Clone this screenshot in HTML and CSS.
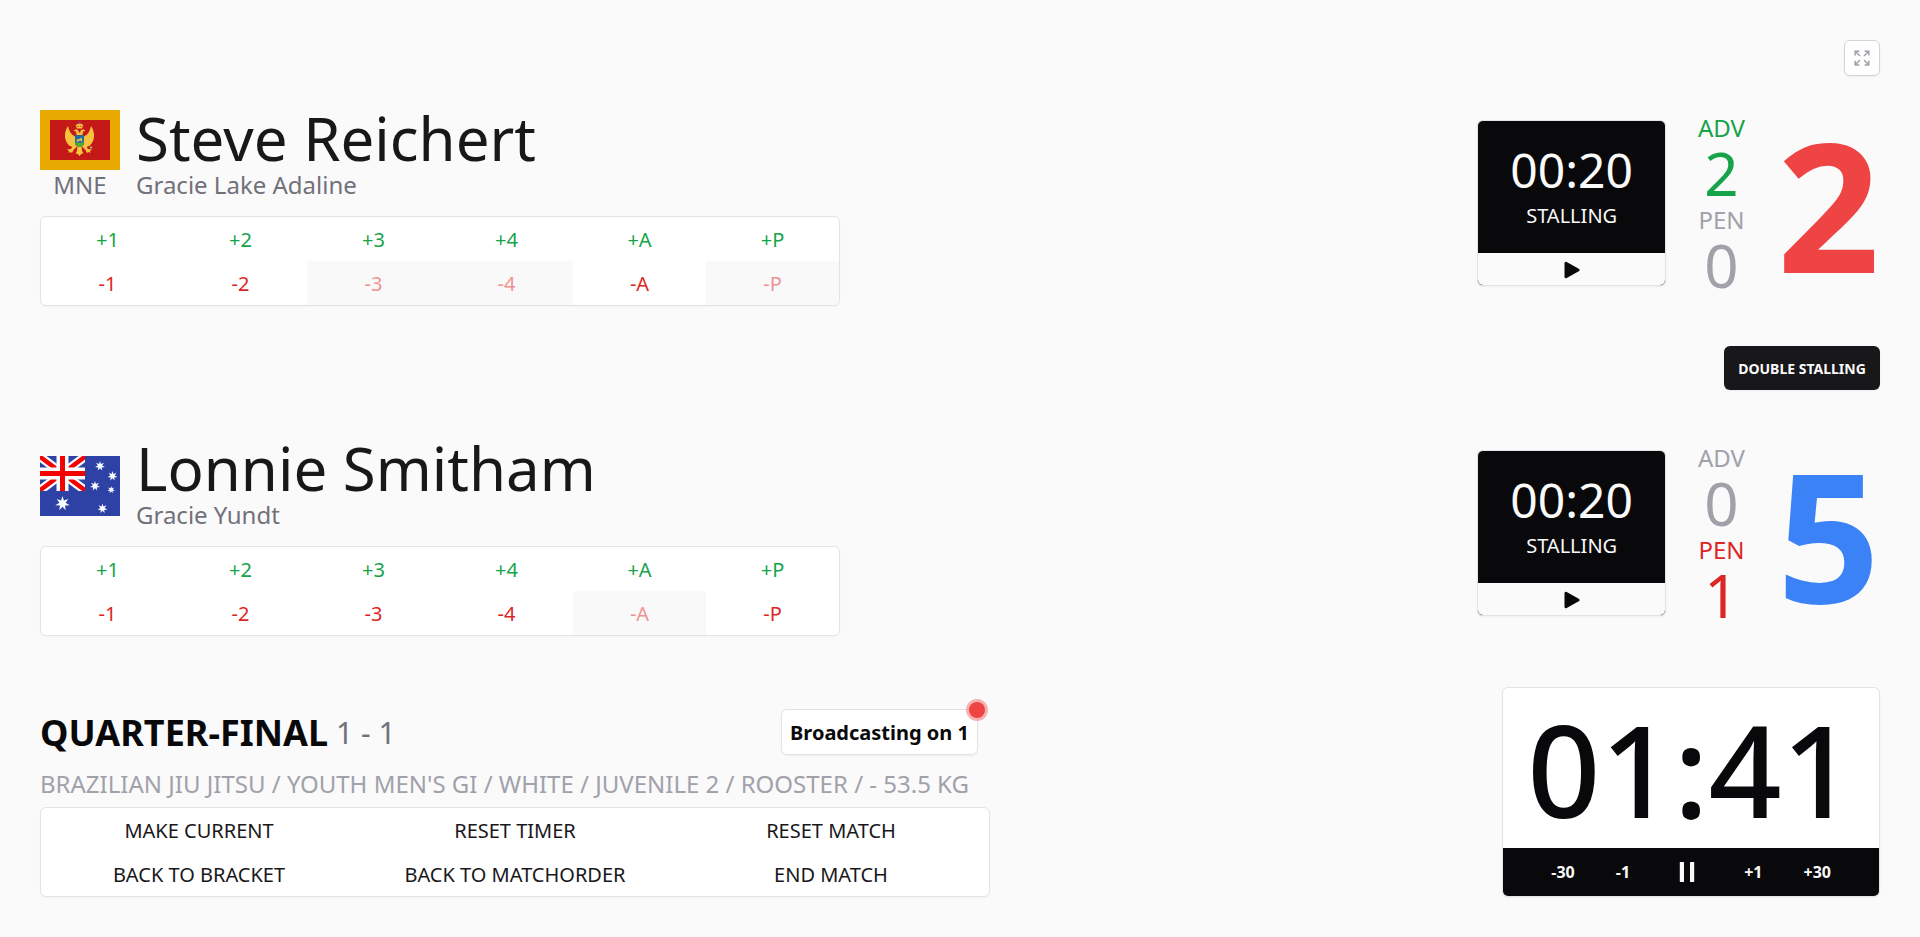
FILE: index.html
```html
<!DOCTYPE html>
<html lang="en">
<head>
    <meta charset="UTF-8">
    <meta name="viewport" content="width=device-width, initial-scale=1.0">
    <title>Scoreboard</title>
    <link rel="stylesheet" href="styles.css">
</head>
<body>
    <div class="toolbar">
        <button class="fullscreen" aria-label="Fullscreen">
            <svg viewBox="0 0 24 24" width="20" height="20" fill="none" stroke="currentColor" stroke-width="1.8" stroke-linecap="round" stroke-linejoin="round">
                <path d="M3.75 3.75v4.5m0-4.5h4.5m-4.5 0L9 9M3.75 20.25v-4.5m0 4.5h4.5m-4.5 0L9 15M20.25 3.75h-4.5m4.5 0v4.5m0-4.5L15 9m5.25 11.25h-4.5m4.5 0v-4.5m0 4.5L15 15"/>
            </svg>
        </button>
    </div>

    <div class="athlete">
        <div class="info">
            <div class="identity">
                <div class="country">
                    <svg class="flag" viewBox="0 0 80 60">
                        <rect width="80" height="60" fill="#e8a900"/>
                        <rect x="10" y="10" width="60" height="40" fill="#c51918"/>
                        <g fill="#f7c23e">
                            <!-- wings -->
                            <path d="M28 16c-3.500 5-4 12-1.500 16 1.500 3 4 5 8.500 5v-10.500c-4-2-6-5.500-7-10.500z"/>
                            <path d="M51 16c3.500 5 4 12 1.500 16-1.500 3-4 5-8.500 5v-10.500c4-2 6-5.500 7-10.500z"/>
                            <!-- heads -->
                            <path d="M33.500 21l2-1.800 2.500.8 1 2.500h1l1-2.500 2.500-.8 2 1.800-2.500.6-.5 3.400h-6l-.5-3.400z"/>
                            <!-- legs and tail -->
                            <path d="M34 34l-3 5-4 .5 2 1.500-.5 2 2-1 1.500 1 1.500-3 4-4zM45 34l3 5 4 .5-2 1.500.5 2-2-1-1.500 1-1.500-3-4-4z"/>
                            <path d="M37.500 36h4l.5 4.500 1.200 3-2 .5-1.700 2-1.700-2-2-.5 1.200-3z"/>
                        </g>
                        <!-- crown -->
                        <path d="M37 18.500l-1.300-3 1.800-1.700h4l1.800 1.700-1.300 3z" fill="#f7c23e"/>
                        <path d="M37.300 16.300h1.400M40.300 16.300h1.400" stroke="#c51918"/>
                        <circle cx="39.500" cy="12.500" r=".9" fill="#5b5ba8"/>
                        <!-- shield -->
                        <path d="M35 25.200h9V33c0 2-2 3.500-4.500 4C37 36.500 35 35 35 33z" fill="#1c6fa6"/>
                        <path d="M35 32.800h9c0 2.500-2 3.700-4.500 4.200C37 36.500 35 35.300 35 32.800z" fill="#5bab2b"/>
                        <path d="M36.500 31.500l.5-2 2.500-.5 2-1.500 1 4h-1l-.5-1-2 .2-.5.8z" fill="#f7c23e"/>
                        <circle cx="51" cy="37.500" r="1.200" fill="#b4a268"/>
                    </svg>
                    <span class="code">MNE</span>
                </div>
                <div class="names">
                    <div class="name">Steve Reichert</div>
                    <div class="team">Gracie Lake Adaline</div>
                </div>
            </div>
            <div class="points">
                <button class="plus">+1</button>
                <button class="plus">+2</button>
                <button class="plus">+3</button>
                <button class="plus">+4</button>
                <button class="plus">+A</button>
                <button class="plus">+P</button>
                <button class="minus">-1</button>
                <button class="minus">-2</button>
                <button class="minus" disabled>-3</button>
                <button class="minus" disabled>-4</button>
                <button class="minus">-A</button>
                <button class="minus" disabled>-P</button>
            </div>
        </div>
        <div class="results">
            <div class="stalling">
                <div class="stalling-body">
                    <div class="stalling-time">00:20</div>
                    <div class="stalling-label">STALLING</div>
                </div>
                <button class="stalling-play" aria-label="Start">
                    <svg viewBox="0 0 16 18" width="16" height="18"><path d="M2 2.200v13.600L14 9z" fill="currentColor" stroke="currentColor" stroke-width="3" stroke-linejoin="round"/></svg>
                </button>
            </div>
            <div class="extras">
                <div class="label green">ADV</div>
                <div class="value green">2</div>
                <div class="label">PEN</div>
                <div class="value">0</div>
            </div>
            <div class="score red">2</div>
        </div>
    </div>

    <div class="middle">
        <button class="double-stalling">DOUBLE STALLING</button>
    </div>

    <div class="athlete">
        <div class="info">
            <div class="identity">
                <div class="country">
                    <svg class="flag" viewBox="0 0 80 60">
                        <defs>
                            <path id="star" d="M0-9l1.700 5.400 5.300-2-3.200 4.700 5 2.900-5.700.5.800 5.700L0 4.100l-3.900 4.100.8-5.700-5.700-.5 5-2.900L-7-5.600l5.300 2z"/>
                            <clipPath id="canton"><path d="M0 0h45v35H0z"/></clipPath>
                        </defs>
                        <rect width="80" height="60" fill="#2e42a5"/>
                        <g clip-path="url(#canton)">
                            <path d="M-1 0l47 35M46 0L-1 35" stroke="#f7fcff" stroke-width="9"/>
                            <path d="M-1 0l47 35M46 0L-1 35" stroke="#f50100" stroke-width="4.500"/>
                            <path d="M22.500 0v35M0 17.500h45" stroke="#f7fcff" stroke-width="12"/>
                            <path d="M22.500 0v35M0 17.500h45" stroke="#f50100" stroke-width="5"/>
                        </g>
                        <g fill="#f7fcff">
                            <use href="#star" transform="translate(22.500 47.500) scale(.82)"/>
                            <use href="#star" transform="translate(60 10) scale(.56)"/>
                            <use href="#star" transform="translate(72.500 20) scale(.56)"/>
                            <use href="#star" transform="translate(55 30) scale(.56)"/>
                            <use href="#star" transform="translate(71.200 33.800) scale(.43)"/>
                            <use href="#star" transform="translate(62.500 52.500) scale(.56)"/>
                        </g>
                    </svg>
                </div>
                <div class="names">
                    <div class="name">Lonnie Smitham</div>
                    <div class="team">Gracie Yundt</div>
                </div>
            </div>
            <div class="points">
                <button class="plus">+1</button>
                <button class="plus">+2</button>
                <button class="plus">+3</button>
                <button class="plus">+4</button>
                <button class="plus">+A</button>
                <button class="plus">+P</button>
                <button class="minus">-1</button>
                <button class="minus">-2</button>
                <button class="minus">-3</button>
                <button class="minus">-4</button>
                <button class="minus" disabled>-A</button>
                <button class="minus">-P</button>
            </div>
        </div>
        <div class="results">
            <div class="stalling">
                <div class="stalling-body">
                    <div class="stalling-time">00:20</div>
                    <div class="stalling-label">STALLING</div>
                </div>
                <button class="stalling-play" aria-label="Start">
                    <svg viewBox="0 0 16 18" width="16" height="18"><path d="M2 2.200v13.600L14 9z" fill="currentColor" stroke="currentColor" stroke-width="3" stroke-linejoin="round"/></svg>
                </button>
            </div>
            <div class="extras">
                <div class="label">ADV</div>
                <div class="value">0</div>
                <div class="label danger">PEN</div>
                <div class="value danger">1</div>
            </div>
            <div class="score blue">5</div>
        </div>
    </div>

    <div class="footer">
        <div class="match">
            <div class="match-header">
                <div class="round">QUARTER-FINAL</div>
                <div class="match-number">1 - 1</div>
                <button class="broadcast">Broadcasting on 1<span class="dot"></span></button>
            </div>
            <div class="category">BRAZILIAN JIU JITSU / YOUTH MEN'S GI / WHITE / JUVENILE 2 / ROOSTER / - 53.5 KG</div>
            <div class="actions">
                <button>MAKE CURRENT</button>
                <button>RESET TIMER</button>
                <button>RESET MATCH</button>
                <button>BACK TO BRACKET</button>
                <button>BACK TO MATCHORDER</button>
                <button>END MATCH</button>
            </div>
        </div>
        <div class="timer">
            <div class="time">01:41</div>
            <div class="timer-controls">
                <button>-30</button>
                <button>-1</button>
                <button aria-label="Pause">
                    <svg viewBox="0 0 32 32" width="32" height="32" fill="currentColor"><rect x="8.800" y="6" width="4.200" height="20" rx=".5"/><rect x="19" y="6" width="4.200" height="20" rx=".5"/></svg>
                </button>
                <button>+1</button>
                <button>+30</button>
            </div>
        </div>
    </div>
</body>
</html>
```

FILE: styles.css
```css
* {
    box-sizing: border-box;
}
body {
    margin: 0;
    padding: 40px;
    height: 100vh;
    display: flex;
    flex-direction: column;
    overflow: hidden;
    font-family: 'Noto Sans', sans-serif;
    font-size: 16px;
    line-height: 24px;
    background-color: #fafafa;
    color: #09090b;
}
button {
    margin: 0;
    padding: 0;
    border: none;
    background: none;
    color: inherit;
    font: inherit;
    cursor: pointer;
}
svg {
    display: block;
}
.toolbar, .middle {
    display: flex;
    justify-content: flex-end;
}
.toolbar {
    margin-bottom: 24px;
}
.fullscreen {
    display: flex;
    align-items: center;
    justify-content: center;
    width: 36px;
    height: 36px;
    border: 1px solid #d4d4d8;
    border-radius: 6px;
    background: #fff;
    color: #a1a1aa;
    box-shadow: 0 1px 2px rgba(0, 0, 0, 0.05);
}
.athlete {
    display: flex;
    align-items: center;
    justify-content: space-between;
    height: 206px;
}
.info {
    width: 800px;
    padding-top: 8px;
}
.identity {
    display: flex;
    gap: 16px;
    height: 96px;
    margin-bottom: 12px;
}
.country {
    display: flex;
    flex-direction: column;
    align-items: center;
    justify-content: center;
    width: 80px;
    font-size: 24px;
    line-height: 32px;
    color: #71717a;
}
.flag {
    width: 80px;
    height: 60px;
}
.code {
    margin: -1px 0 1px;
}
.name {
    font-size: 60px;
    line-height: 60px;
    color: #18181b;
}
.team {
    padding-top: 2px;
    font-size: 24px;
    line-height: 30px;
    color: #71717a;
}
.points, .actions {
    display: grid;
    grid-template-columns: repeat(6, 1fr);
    grid-auto-rows: 44px;
    border: 1px solid #e4e4e7;
    border-radius: 6px;
    background: #fff;
    overflow: hidden;
    font-size: 20px;
    line-height: 28px;
    box-shadow: 0 1px 2px rgba(0, 0, 0, 0.03);
}
.points button, .actions button {
    padding-top: 2px;
}
.plus {
    color: #16a34a;
}
.minus {
    color: #dc2626;
}
.minus:disabled {
    background: #f4f4f5;
    opacity: 0.5;
}
.results {
    display: flex;
    align-items: center;
    gap: 32px;
}
.stalling {
    border: 1px solid #e4e4e7;
    border-radius: 6px;
    background: #09090b;
    overflow: hidden;
    text-align: center;
    box-shadow: 0 1px 2px rgba(0, 0, 0, 0.05);
}
.stalling-body {
    padding: 25px 32px 23px;
    color: #fafafa;
}
.stalling-time {
    margin-bottom: 8px;
    font-size: 48px;
    line-height: 48px;
}
.stalling-label {
    font-size: 20px;
    line-height: 28px;
}
.stalling-play {
    display: flex;
    align-items: center;
    justify-content: center;
    width: 100%;
    height: 32px;
    padding-top: 2px;
    background: #fafafa;
}
.extras {
    text-align: center;
    color: #a1a1aa;
}
.label {
    padding-top: 2px;
    font-size: 24px;
    line-height: 30px;
}
.value {
    font-size: 60px;
    line-height: 60px;
}
.green {
    color: #16a34a;
}
.danger {
    color: #dc2626;
}
.score {
    padding-top: 2px;
    font-size: 180px;
    line-height: 180px;
    font-weight: bold;
}
.red {
    color: #ef4444;
}
.blue {
    color: #3b82f6;
}
.middle {
    padding: 40px 0;
}
.double-stalling {
    width: 156px;
    height: 44px;
    padding-top: 2px;
    border-radius: 6px;
    background: #18181b;
    color: #fafafa;
    font-size: 14px;
    font-weight: bold;
    box-shadow: 0 1px 2px rgba(0, 0, 0, 0.05);
}
.footer {
    display: flex;
    align-items: flex-end;
    justify-content: space-between;
    margin-top: auto;
}
.match {
    width: 950px;
}
.match-header {
    display: flex;
    align-items: center;
    gap: 8px;
    padding-right: 12px;
    margin-bottom: 12px;
}
.round {
    padding-top: 2px;
    font-size: 36px;
    line-height: 40px;
    font-weight: bold;
}
.match-number {
    padding-top: 2px;
    font-size: 30px;
    line-height: 36px;
    color: #71717a;
}
.broadcast {
    position: relative;
    margin-left: auto;
    padding: 9px 8px 7px;
    height: 46px;
    border: 1px solid #e4e4e7;
    border-radius: 6px;
    background: #fff;
    font-size: 20px;
    line-height: 28px;
    font-weight: bold;
    box-shadow: 0 1px 2px rgba(0, 0, 0, 0.05);
}
.dot {
    position: absolute;
    top: -8px;
    right: -8px;
    width: 16px;
    height: 16px;
    border-radius: 50%;
    background: #ef4444;
    box-shadow: 0 0 0 3px rgba(239, 68, 68, 0.4);
}
.category {
    padding-top: 2px;
    margin-bottom: 8px;
    font-size: 24px;
    line-height: 30px;
    color: #a1a1aa;
    white-space: nowrap;
}
.actions {
    grid-template-columns: repeat(3, 1fr);
    color: #18181b;
}
.timer {
    border: 1px solid #e4e4e7;
    border-radius: 6px;
    background: #fff;
    overflow: hidden;
    box-shadow: 0 1px 2px rgba(0, 0, 0, 0.05);
}
.time {
    padding: 17px 24px 15px;
    font-size: 128px;
    line-height: 128px;
    font-weight: 500;
}
.timer-controls {
    display: flex;
    align-items: center;
    justify-content: space-between;
    height: 48px;
    padding: 0 48px;
    background: #09090b;
    color: #fafafa;
    font-weight: bold;
}
```
